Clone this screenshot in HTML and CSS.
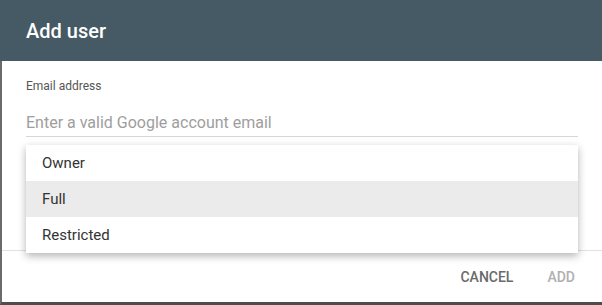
FILE: index.html
```html
<!DOCTYPE html>
<html>
<head>
<meta charset="utf-8">
<link rel="stylesheet" href="styles.css">
</head>
<body>
<div class="dialog">
  <div class="header">Add user</div>
  <div class="main">
    <div class="content">
      <div class="label">Email address</div>
      <div class="input">Enter a valid Google account email</div>
    </div>
    <div class="footer">
      <span class="btn cancel">Cancel</span>
      <span class="btn add">Add</span>
    </div>
    <ul class="menu">
      <li class="item">Owner</li>
      <li class="item active">Full</li>
      <li class="item">Restricted</li>
    </ul>
  </div>
</div>
</body>
</html>
```
FILE: styles.css
```css
html, body {
  margin: 0;
  padding: 0;
  background: #fff;
}
body {
  width: 602px;
  height: 305px;
  overflow: hidden;
  font-family: Roboto, "Liberation Sans", sans-serif;
}
.dialog {
  height: 305px;
  display: flex;
  flex-direction: column;
}
.header {
  height: 61px;
  flex: none;
  box-sizing: border-box;
  background: #455a64;
  color: #fff;
  font-size: 20px;
  font-weight: 500;
  padding-left: 26px;
  display: flex;
  align-items: center;
}
.main {
  flex: 1;
  position: relative;
  display: flex;
  flex-direction: column;
  border-left: 2px solid #6b6b6b;
  border-bottom: 3px solid #4d4d4d;
}
.content {
  height: 189px;
  box-sizing: border-box;
  padding: 18px 24px 0 24px;
}
.label {
  font-size: 12px;
  line-height: 14px;
  color: #555;
  margin-bottom: 20px;
}
.input {
  font-size: 16px;
  line-height: 20px;
  color: #9e9e9e;
  padding-bottom: 3px;
  border-bottom: 1px solid #d6d6d6;
}
.footer {
  flex: 1;
  border-top: 1px solid #e2e2e2;
  display: flex;
  justify-content: flex-end;
  align-items: center;
  gap: 34px;
  padding-right: 27px;
}
.btn {
  font-size: 14px;
  font-weight: 500;
  line-height: 20px;
  text-transform: uppercase;
}
.cancel {
  color: #6a6a6a;
}
.add {
  color: #b0b0b0;
}
.menu {
  position: absolute;
  top: 84px;
  left: 24px;
  right: 24px;
  margin: 0;
  padding: 0;
  list-style: none;
  background: #fff;
  box-shadow: 0 3px 8px rgba(0, 0, 0, 0.3);
}
.item {
  height: 36px;
  line-height: 36px;
  padding-left: 16px;
  font-size: 15px;
  color: #333;
}
.item.active {
  background: #ebebeb;
}
```
